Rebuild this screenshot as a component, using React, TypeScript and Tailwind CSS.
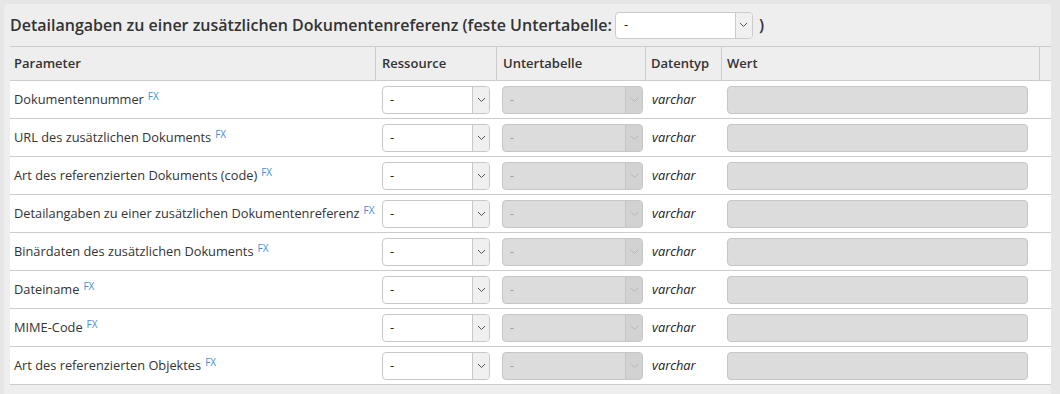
import React from "react";

const rows = [
  "Dokumentennummer",
  "URL des zusätzlichen Dokuments",
  "Art des referenzierten Dokuments (code)",
  "Detailangaben zu einer zusätzlichen Dokumentenreferenz",
  "Binärdaten des zusätzlichen Dokuments",
  "Dateiname",
  "MIME-Code",
  "Art des referenzierten Objektes",
];

function Chevron({ color }: { color: string }) {
  return (
    <svg width="9" height="6" viewBox="0 0 9 6" fill="none">
      <polyline points="1,1 4.5,4.5 8,1" stroke={color} strokeWidth="1" />
    </svg>
  );
}

function Select({ disabled, w }: { disabled?: boolean; w: string }) {
  if (disabled) {
    return (
      <div className={`flex h-[28px] ${w} rounded-[4px] border border-[#c6c6c6] bg-[#dcdcdc] overflow-hidden`}>
        <div className="flex-1 flex items-center pl-[7px] text-[12px] text-[#9a9a9a]">-</div>
        <div className="w-[17px] flex items-center justify-center border-l border-[#c6c6c6] bg-[#d2d2d2]">
          <Chevron color="#b4b4b4" />
        </div>
      </div>
    );
  }
  return (
    <div className={`flex h-[28px] ${w} rounded-[4px] border border-[#c8c8c8] bg-white overflow-hidden`}>
      <div className="flex-1 flex items-center pl-[7px] text-[13px] text-[#222]">-</div>
      <div className="w-[17px] flex items-center justify-center border-l border-[#c8c8c8] bg-[#f0f0f0]">
        <Chevron color="#555" />
      </div>
    </div>
  );
}

export default function App() {
  return (
    <div
      className="w-[1060px] h-[394px] bg-[#e6e6e6] pt-[4px] pl-[4px] overflow-hidden"
      style={{ fontFamily: '"Open Sans", "Liberation Sans", sans-serif' }}
    >
      <div className="w-[1047px] h-[400px] bg-[#eeeeee] rounded-[4px] pl-[6px]">
        <div className="flex items-center h-[42px] text-[16px] font-semibold text-[#333]">
          <span className="whitespace-nowrap">
            Detailangaben zu einer zusätzlichen Dokumentenreferenz (feste Untertabelle:
          </span>
          <div className="ml-[3px] flex h-[27px] w-[138px] rounded-[4px] border border-[#cccccc] bg-white overflow-hidden">
            <div className="flex-1 flex items-center pl-[8px] text-[13px] font-normal text-[#222]">-</div>
            <div className="w-[17px] flex items-center justify-center border-l border-[#cccccc] bg-[#f0f0f0]">
              <Chevron color="#555" />
            </div>
          </div>
          <span className="ml-[6px]">)</span>
        </div>
        <div className="w-[1041px] border-t border-[#cccccc]">
          <div className="grid grid-cols-[366px_121px_149px_76px_318px_11px] h-[34px] border-b border-[#cccccc] text-[13px] font-semibold text-[#333]">
            <div className="flex items-center pl-[4px] border-r border-[#cccccc]">Parameter</div>
            <div className="flex items-center pl-[6px] border-r border-[#cccccc]">Ressource</div>
            <div className="flex items-center pl-[6px] border-r border-[#cccccc]">Untertabelle</div>
            <div className="flex items-center pl-[5px] border-r border-[#cccccc]">Datentyp</div>
            <div className="flex items-center pl-[5px] border-r border-[#cccccc]">Wert</div>
            <div />
          </div>
          {rows.map((r) => (
            <div
              key={r}
              className="grid grid-cols-[366px_121px_149px_76px_318px_11px] h-[38px] border-b border-[#cccccc] bg-white text-[12.8px] text-[#333]"
            >
              <div className="flex items-center pl-[4px] pt-[1px] whitespace-nowrap">
                <span>{r}</span>
                <span className="ml-[4px] -mt-[7px] text-[10px] text-[#3d8fdb]">FX</span>
              </div>
              <div className="flex items-center pl-[6px]">
                <Select w="w-[108px]" />
              </div>
              <div className="flex items-center pl-[5px]">
                <Select disabled w="w-[141px]" />
              </div>
              <div className="flex items-center pl-[6px] pt-[1px] italic text-[#222]">varchar</div>
              <div className="flex items-center pl-[5px]">
                <div className="h-[28px] w-[301px] rounded-[4px] border border-[#c6c6c6] bg-[#dcdcdc]" />
              </div>
              <div />
            </div>
          ))}
        </div>
      </div>
    </div>
  );
}
